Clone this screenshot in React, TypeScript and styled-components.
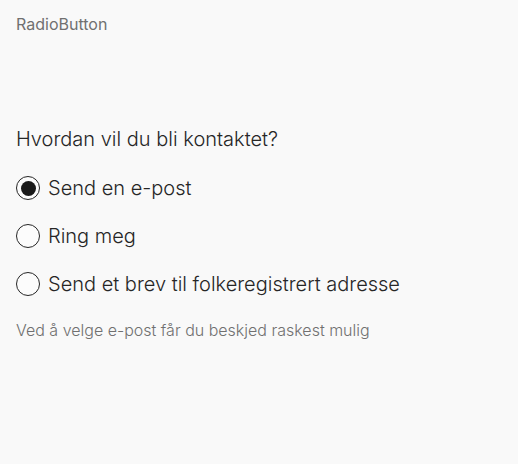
import styled, { createGlobalStyle } from "styled-components";

const GlobalStyle = createGlobalStyle`
  html, body {
    margin: 0;
    padding: 0;
    background: #f9f9f9;
  }
  body {
    font-family: "Inter", "Roboto", "Liberation Sans", sans-serif;
    font-weight: 300;
    color: #262626;
  }
`;

const Page = styled.div`
  padding: 13px 16px;
  min-height: 100vh;
  box-sizing: border-box;
`;

const StoryTitle = styled.div`
  font-size: 16px;
  font-weight: 400;
  line-height: 22px;
  color: #707070;
  margin-bottom: 90px;
`;

const Fieldset = styled.fieldset`
  border: 0;
  margin: 0;
  padding: 0;
  min-width: 0;
`;

const Legend = styled.legend`
  padding: 0;
  font-size: 20px;
  line-height: 28px;
  color: #262626;
  margin-bottom: 11px;
`;

const Options = styled.div`
  display: flex;
  flex-direction: column;
`;

const Option = styled.label`
  display: flex;
  align-items: center;
  gap: 8px;
  height: 48px;
  cursor: pointer;
  font-size: 20px;
  color: #262626;
`;

const Circle = styled.span<{ $checked: boolean }>`
  width: 24px;
  height: 24px;
  box-sizing: border-box;
  border-radius: 50%;
  border: 1.25px solid #262626;
  background: #fcfcfc;
  display: flex;
  align-items: center;
  justify-content: center;
  flex: none;

  &::after {
    content: "";
    width: 15px;
    height: 15px;
    border-radius: 50%;
    background: #1a1a1a;
    display: ${(p) => (p.$checked ? "block" : "none")};
  }
`;

const HiddenInput = styled.input`
  position: absolute;
  opacity: 0;
  width: 0;
  height: 0;
  margin: 0;
`;

const Description = styled.div`
  margin-top: 11px;
  font-size: 16px;
  line-height: 22px;
  color: #707070;
`;

const options = [
  { value: "epost", label: "Send en e-post" },
  { value: "telefon", label: "Ring meg" },
  { value: "brev", label: "Send et brev til folkeregistrert adresse" },
];

export default function App() {
  const selected = "epost";
  return (
    <>
      <GlobalStyle />
      <Page>
        <StoryTitle>RadioButton</StoryTitle>
        <Fieldset>
          <Legend>Hvordan vil du bli kontaktet?</Legend>
          <Options>
            {options.map((o) => (
              <Option key={o.value}>
                <HiddenInput
                  type="radio"
                  name="kontakt"
                  value={o.value}
                  defaultChecked={o.value === selected}
                />
                <Circle $checked={o.value === selected} />
                {o.label}
              </Option>
            ))}
          </Options>
          <Description>Ved å velge e-post får du beskjed raskest mulig</Description>
        </Fieldset>
      </Page>
    </>
  );
}
